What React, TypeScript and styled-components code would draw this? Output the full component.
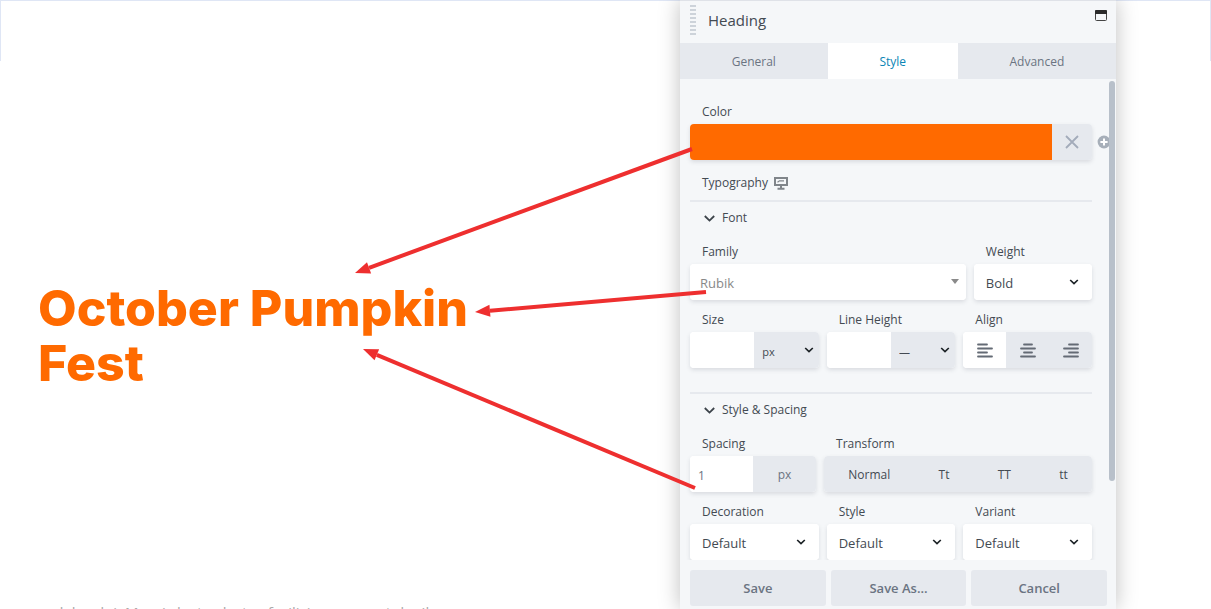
import React from "react";
import styled, { createGlobalStyle, css } from "styled-components";

const GlobalStyle = createGlobalStyle`
  *, *::before, *::after { box-sizing: border-box; }
  body { margin: 0; background: #fff; }
  button, input, select { font: inherit; color: inherit; border: 0; margin: 0; border-radius: 0; }
  button { padding: 0; cursor: pointer; }
`;

const c = {
  panel: "#f5f7f9",
  well: "#e6e9ee",
  text: "#434a52",
  muted: "#6b7482",
  accent: "#0a85b5",
  orange: "#ff6a00",
  arrow: "#ee2f2f",
};

const Page = styled.div`
  display: grid;
  grid-template-columns: minmax(0, 1fr) 436px 95px;
  height: 100vh;
  overflow: hidden;
  font-family: "Open Sans", "Noto Sans", sans-serif;
  color: ${c.text};
`;

const Canvas = styled.main`
  display: flex;
  flex-direction: column;
  min-width: 0;
  overflow: hidden;
  padding: 281px 0 0 38px;
  background: linear-gradient(#dfe6f5, #dfe6f5) 0 0 / 100% 1px no-repeat,
    linear-gradient(#dfe6f5, #dfe6f5) 0 0 / 1px 61px no-repeat;
`;

const Gutter = styled.div`
  background: linear-gradient(#dfe6f5, #dfe6f5) 0 0 / 100% 1px no-repeat,
    linear-gradient(#dfe6f5, #dfe6f5) 100% 0 / 1px 61px no-repeat;
`;

const Title = styled.h1`
  margin: 0;
  max-width: 500px;
  color: ${c.orange};
  font: 800 50px/55px Inter, Roboto, sans-serif;
`;

const Copy = styled.p`
  margin: 209px 0 0;
  color: #aaa;
  font: 400 15px/24px "Open Sans", sans-serif;
  white-space: nowrap;
`;

const Panel = styled.aside`
  position: relative;
  display: flex;
  flex-direction: column;
  min-width: 0;
  min-height: 0;
  border-top: 1px solid #dfe2e8;
  background: ${c.panel};
  box-shadow: 0 0 20px rgba(0, 0, 0, 0.25);
`;

const Header = styled.header`
  display: flex;
  align-items: flex-start;
  flex: 0 0 42px;
  padding: 4px 9px 0 10px;
`;

const Grip = styled.span`
  width: 6px;
  height: 30px;
  background: repeating-linear-gradient(#cdd3da 0 2px, transparent 2px 4px);
`;

const PanelTitle = styled.h2`
  flex: 1;
  margin: 0 0 0 12px;
  font-size: 15px;
  font-weight: 400;
  line-height: 30px;
`;

const IconButton = styled.button`
  display: flex;
  margin-top: 5px;
  background: none;
`;

const Tabs = styled.div`
  display: flex;
  flex: 0 0 36px;
`;

const Tab = styled.button<{ $active?: boolean }>`
  flex: 1 1 auto;
  background: ${(p) => (p.$active ? "#fff" : c.well)};
  color: ${(p) => (p.$active ? c.accent : c.muted)};
  font-size: 12px;
`;

const Body = styled.div`
  position: relative;
  flex: 1;
  min-height: 0;
  overflow: hidden;
  padding: 25px 24px 0 10px;
`;

const Thumb = styled.span`
  position: absolute;
  top: 2px;
  right: 1px;
  width: 6px;
  height: 400px;
  border-radius: 3px;
  background: #b8c0ca;
`;

const Label = styled.label`
  display: block;
  width: max-content;
  margin: 0 0 4px 12px;
  font-size: 12px;
  line-height: 16px;
`;

const shadowBox = css`
  border-radius: 4px;
  box-shadow: 0 2px 4px rgba(60, 70, 90, 0.15);
`;

const ColorRow = styled.div`
  position: relative;
  display: flex;
  height: 36px;
  ${shadowBox}
`;

const Swatch = styled.button`
  flex: 1;
  border-radius: 4px 0 0 4px;
  background: ${c.orange};
`;

const ClearButton = styled.button`
  display: flex;
  align-items: center;
  justify-content: center;
  width: 40px;
  border-radius: 0 4px 4px 0;
  background: ${c.well};
`;

const AddButton = styled.button`
  position: absolute;
  top: 11px;
  right: -19px;
  display: flex;
  background: none;
`;

const Typography = styled.div`
  display: flex;
  align-items: center;
  gap: 6px;
  padding: 15px 0 9px 12px;
  font-size: 12px;
  line-height: 16px;
`;

const Section = styled.section`
  padding: 8px 0 24px;
  border-top: 2px solid ${c.well};
`;

const SectionToggle = styled.button`
  display: flex;
  align-items: center;
  gap: 7px;
  margin: 0 0 18px 14px;
  background: none;
  font-size: 12px;
  line-height: 16px;
`;

const Row = styled.div<{ $cols: string }>`
  display: grid;
  grid-template-columns: ${(p) => p.$cols};
  column-gap: 8px;
  > * { min-width: 0; }
  & + & { margin-top: 12px; }
`;

const Box = styled.div`
  display: flex;
  height: 36px;
  overflow: hidden;
  background: #fff;
  ${shadowBox}
`;

const NumberInput = styled.input`
  flex: 1 1 0;
  width: 0;
  min-width: 0;
  padding: 2px 0 0;
  text-indent: 8px;
  background: #fff;
  color: ${c.muted};
  font-size: 12px;
  outline: 0;
`;

const Unit = styled.button`
  flex: 1 1 0;
  background: ${c.well};
  color: ${c.muted};
  font-size: 12px;
`;

const SelectWrap = styled.div<{ $unit?: boolean; $edge: number }>`
  position: relative;
  flex: 1 1 0;
  min-width: 0;
  background: ${(p) => (p.$unit ? c.well : "#fff")};
  svg {
    position: absolute;
    top: 15px;
    right: ${(p) => p.$edge}px;
    pointer-events: none;
  }
`;

const Select = styled.select<{ $pad: number; $size: number; $muted?: boolean }>`
  appearance: none;
  width: 100%;
  height: 100%;
  padding: 2px 20px 0 ${(p) => p.$pad}px;
  background: none;
  color: ${(p) => (p.$muted ? "#888" : c.text)};
  font-size: ${(p) => p.$size}px;
  outline: 0;
`;

const Segment = styled.button<{ $on?: boolean; $even?: boolean }>`
  display: flex;
  align-items: center;
  justify-content: center;
  flex: ${(p) => (p.$even ? "1 1 0" : "1 1 auto")};
  background: ${(p) => (p.$on ? "#fff" : c.well)};
  font-size: 12px;
`;

const Footer = styled.footer`
  display: flex;
  gap: 5px;
  padding: 10px 9px 3px 10px;
`;

const FooterButton = styled.button`
  flex: 1 1 0;
  height: 36px;
  border-radius: 3px;
  background: ${c.well};
  color: ${c.muted};
  font-size: 13px;
  font-weight: 600;
`;

const Annotations = styled.svg`
  position: absolute;
  top: -1px;
  left: -340px;
  pointer-events: none;
`;

const Chevron = () => (
  <svg width="10" height="6" viewBox="0 0 10 6" fill="none" stroke="#1d2327" strokeWidth="1.7">
    <path d="M1.2 1L5 4.6 8.8 1" />
  </svg>
);

const SectionChevron = () => (
  <svg width="11" height="7" viewBox="0 0 11 7" fill="none" stroke="#3c434a" strokeWidth="1.8">
    <path d="M0.8 1l4.7 4.6L10.2 1" />
  </svg>
);

const Caret = () => (
  <svg width="8" height="5" viewBox="0 0 8 5" fill="#8a8a8a">
    <path d="M0 0h8L4 5z" />
  </svg>
);

const Picker = ({ id, label, value }: { id: string; label: string; value: string }) => (
  <div>
    <Label htmlFor={id}>{label}</Label>
    <Box>
      <SelectWrap $edge={13}>
        <Select id={id} $pad={12} $size={13}><option>{value}</option></Select>
        <Chevron />
      </SelectWrap>
    </Box>
  </div>
);

const UnitField = ({ id, label, unit }: { id: string; label: string; unit: string }) => (
  <div>
    <Label htmlFor={id}>{label}</Label>
    <Box>
      <NumberInput id={id} />
      <SelectWrap $unit $edge={5}>
        <Select aria-label={`${label} unit`} $pad={8} $size={11}><option>{unit}</option></Select>
        <Chevron />
      </SelectWrap>
    </Box>
  </div>
);

const alignLines: Record<string, string> = {
  left: "M1 1.5h9M1 5.5h14M1 9.5h9M1 13.5h14",
  center: "M4 1.5h8M1 5.5h14M4 9.5h8M1 13.5h14",
  right: "M6 1.5h9M1 5.5h14M6 9.5h9M1 13.5h14",
};

/* Shaft from tail to tip, with a solid head at the tip. */
const Arrow = ({ from, to }: { from: [number, number]; to: [number, number] }) => {
  const len = Math.hypot(to[0] - from[0], to[1] - from[1]);
  const ux = (to[0] - from[0]) / len;
  const uy = (to[1] - from[1]) / len;
  const bx = to[0] - ux * 15;
  const by = to[1] - uy * 15;
  return (
    <g>
      <line x1={from[0]} y1={from[1]} x2={bx} y2={by} stroke={c.arrow} strokeWidth="4" />
      <polygon
        fill={c.arrow}
        points={`${to[0]},${to[1]} ${bx - uy * 6},${by + ux * 6} ${bx + uy * 6},${by - ux * 6}`}
      />
    </g>
  );
};

export default function App() {
  return (
    <Page>
      <GlobalStyle />
      <Canvas>
        <Title>October Pumpkin Fest</Title>
        <Copy>sodales dui. Mauris luctus lectus facilisis magna, et dapibus neque</Copy>
      </Canvas>
      <Panel>
        <Header>
          <Grip />
          <PanelTitle>Heading</PanelTitle>
          <IconButton aria-label="Toggle window">
            <svg width="12" height="12" viewBox="0 0 12 12">
              <rect x="0.5" y="0.5" width="11" height="10" rx="1" fill="#f5f7f9" stroke="#444" />
              <path d="M0 1q0-1 1-1h10q1 0 1 1v3H0z" fill="#2b2b2b" />
            </svg>
          </IconButton>
        </Header>
        <Tabs role="tablist">
          <Tab role="tab" aria-selected={false}>General</Tab>
          <Tab role="tab" aria-selected $active>Style</Tab>
          <Tab role="tab" aria-selected={false}>Advanced</Tab>
        </Tabs>
        <Body>
          <Label htmlFor="color">Color</Label>
          <ColorRow>
            <Swatch id="color" />
            <ClearButton aria-label="Clear color">
              <svg width="14" height="14" viewBox="0 0 14 14" stroke="#a3abba" strokeWidth="1.8">
                <path d="M1 1l12 12M13 1L1 13" />
              </svg>
            </ClearButton>
            <AddButton aria-label="Add color">
              <svg width="14" height="14" viewBox="0 0 14 14">
                <circle cx="7" cy="7" r="6.4" fill="#a7afb9" />
                <path d="M7 3.4v7.2M3.4 7h7.2" stroke="#fff" strokeWidth="2" />
              </svg>
            </AddButton>
          </ColorRow>
          <Typography>
            Typography
            <svg width="14" height="14" viewBox="0 0 14 14" fill="none" stroke="#80858a">
              <rect x="1" y="2" width="12" height="7" strokeWidth="2" />
              <path d="M3.5 6.2l2-1.4h4.5" strokeWidth="1.2" />
              <path d="M7 9v3M3.5 12.8h7" strokeWidth="2" />
            </svg>
          </Typography>
          <Section>
            <SectionToggle><SectionChevron />Font</SectionToggle>
            <Row $cols="7fr 3fr">
              <div>
                <Label htmlFor="family">Family</Label>
                <Box>
                  <SelectWrap $edge={7}>
                    <Select id="family" $pad={10} $size={13} $muted><option>Rubik</option></Select>
                    <Caret />
                  </SelectWrap>
                </Box>
              </div>
              <Picker id="weight" label="Weight" value="Bold" />
            </Row>
            <Row $cols="1fr 1fr 1fr">
              <UnitField id="size" label="Size" unit="px" />
              <UnitField id="line" label="Line Height" unit="—" />
              <div>
                <Label as="span">Align</Label>
                <Box role="group" aria-label="Align">
                  {["left", "center", "right"].map((a) => (
                    <Segment key={a} $even $on={a === "left"} aria-label={a}>
                      <svg width="16" height="15" viewBox="0 0 16 15" stroke="#646b75" strokeWidth="1.8" strokeLinecap="round">
                        <path d={alignLines[a]} />
                      </svg>
                    </Segment>
                  ))}
                </Box>
              </div>
            </Row>
          </Section>
          <Section>
            <SectionToggle><SectionChevron />Style &amp; Spacing</SectionToggle>
            <Row $cols="8fr 17fr">
              <div>
                <Label htmlFor="spacing">Spacing</Label>
                <Box>
                  <NumberInput id="spacing" defaultValue="1" />
                  <Unit>px</Unit>
                </Box>
              </div>
              <div>
                <Label as="span">Transform</Label>
                <Box role="group" aria-label="Transform">
                  {["Normal", "Tt", "TT", "tt"].map((t) => <Segment key={t}>{t}</Segment>)}
                </Box>
              </div>
            </Row>
            <Row $cols="1fr 1fr 1fr">
              <Picker id="decoration" label="Decoration" value="Default" />
              <Picker id="style" label="Style" value="Default" />
              <Picker id="variant" label="Variant" value="Default" />
            </Row>
          </Section>
          <Thumb />
        </Body>
        <Footer>
          <FooterButton>Save</FooterButton>
          <FooterButton>Save As...</FooterButton>
          <FooterButton>Cancel</FooterButton>
        </Footer>
        <Annotations width="370" height="500" viewBox="340 0 370 500" aria-hidden="true">
          <Arrow from={[692, 149]} to={[355, 273]} />
          <Arrow from={[706, 292]} to={[475, 312]} />
          <Arrow from={[695, 488]} to={[363, 349]} />
        </Annotations>
      </Panel>
      <Gutter />
    </Page>
  );
}
